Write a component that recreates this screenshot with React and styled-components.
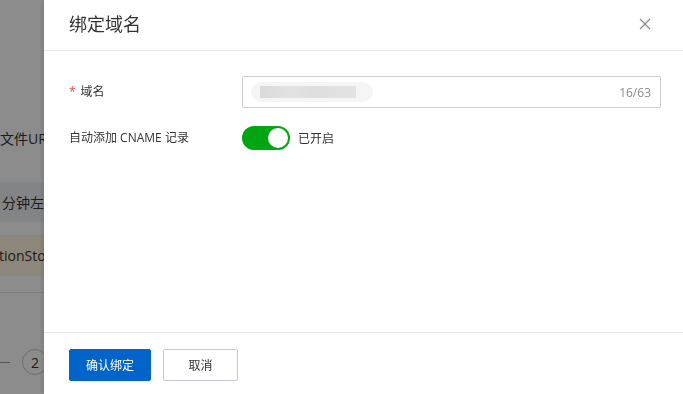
import React from "react";
import styled, { createGlobalStyle } from "styled-components";

const Global = createGlobalStyle`
  html, body { margin: 0; padding: 0; height: 100%; overflow: hidden; }
  body { font-family: "Open Sans", "Noto Sans CJK SC", sans-serif; background: #fff; color: #333; }
  #root { height: 100%; }
`;

const Page = styled.div`
  height: 100%;
  width: 44px;
  display: flex;
  flex-direction: column;
  font-size: 14px;
  color: #333;
  overflow: hidden;
`;

const PageLine = styled.div`
  height: ${(p) => p.$h}px;
  flex: none;
  display: flex;
  align-items: center;
  white-space: nowrap;
  overflow: hidden;
  background: ${(p) => p.$bg || "transparent"};
  margin-top: ${(p) => p.$mt || 0}px;
  border-bottom: ${(p) => (p.$border ? "1px solid #e6e6e6" : "none")};
  text-indent: ${(p) => p.$indent || 0}px;
`;

const Pager = styled.div`
  display: flex;
  align-items: center;
  margin-top: 56px;
  height: 26px;
  flex: none;
`;

const PagerDash = styled.span`
  width: 10px;
  height: 1px;
  background: #999;
  margin-right: 12px;
  flex: none;
`;

const PagerNum = styled.span`
  width: 24px;
  height: 24px;
  border: 1px solid #c8c8c8;
  border-radius: 50%;
  display: flex;
  align-items: center;
  justify-content: center;
  font-size: 14px;
  flex: none;
`;

const Mask = styled.div`
  position: fixed;
  inset: 0;
  background: rgba(0, 0, 0, 0.45);
`;

const Drawer = styled.aside`
  position: fixed;
  top: 0;
  right: 0;
  bottom: 0;
  width: 639px;
  background: #fff;
  display: flex;
  flex-direction: column;
  box-shadow: -2px 0 4px rgba(0, 0, 0, 0.12);
`;

const Header = styled.header`
  height: 51px;
  flex: none;
  display: flex;
  align-items: center;
  justify-content: space-between;
  padding: 0 31px 3px 25px;
  border-bottom: 1px solid #e8e8e8;
  box-sizing: border-box;
`;

const Title = styled.h2`
  margin: 0;
  font-size: 18px;
  font-weight: 400;
  color: #333;
  line-height: 24px;
`;

const CloseBtn = styled.button`
  border: 0;
  background: none;
  padding: 0;
  width: 14px;
  height: 14px;
  display: flex;
  align-items: center;
  justify-content: center;
  cursor: pointer;
`;

const Body = styled.div`
  flex: 1;
  padding: 25px 22px 0 25px;
  display: flex;
  flex-direction: column;
  gap: 18px;
`;

const Row = styled.div`
  display: grid;
  grid-template-columns: 173px 1fr;
  align-items: center;
  min-height: ${(p) => p.$h}px;
`;

const Label = styled.label`
  font-size: 12px;
  line-height: 16px;
  color: #333;
  display: flex;
  align-items: center;
`;

const Required = styled.span`
  color: #e5484d;
  margin-right: 5px;
  font-size: 12px;
`;

const InputBox = styled.div`
  height: 32px;
  border: 1px solid #c9ccd2;
  border-radius: 2px;
  box-sizing: border-box;
  display: flex;
  align-items: center;
  justify-content: space-between;
  padding: 0 9px 0 8px;
`;

const Redacted = styled.span`
  width: 122px;
  height: 20px;
  border-radius: 10px;
  background: #f5f5f5;
  display: flex;
  align-items: center;
  padding-left: 9px;
  box-sizing: border-box;
  filter: blur(0.6px);
`;

const RedactedBlock = styled.span`
  width: 96px;
  height: 12px;
  background: linear-gradient(90deg, #d9d9d9, #e2e2e2 30%, #dedede 60%, #e3e3e3);
`;

const Counter = styled.span`
  font-size: 12px;
  color: #888;
`;

const SwitchWrap = styled.div`
  display: flex;
  align-items: center;
  gap: 8px;
  font-size: 12px;
  color: #333;
`;

const Switch = styled.span`
  width: 48px;
  height: 24px;
  border-radius: 12px;
  background: ${(p) => (p.$on ? "#00a611" : "#ccc")};
  display: flex;
  align-items: center;
  justify-content: ${(p) => (p.$on ? "flex-end" : "flex-start")};
  padding: 0 2px;
  box-sizing: border-box;
`;

const Knob = styled.span`
  width: 20px;
  height: 20px;
  border-radius: 50%;
  background: #fff;
`;

const Footer = styled.footer`
  flex: none;
  height: 62px;
  border-top: 1px solid #e8e8e8;
  padding: 16px 25px 0;
  display: flex;
  gap: 12px;
  box-sizing: border-box;
`;

const Button = styled.button`
  height: 32px;
  width: ${(p) => p.$w}px;
  font-family: inherit;
  font-size: 12px;
  border-radius: 2px;
  cursor: pointer;
  border: 1px solid ${(p) => (p.$primary ? "#0064c8" : "#c5c8ce")};
  background: ${(p) => (p.$primary ? "#0064c8" : "#fff")};
  color: ${(p) => (p.$primary ? "#fff" : "#333")};
  padding: 0;
`;

export default function App() {
  return (
    <>
      <Global />
      <Page>
        <PageLine $h={25} $mt={125}>文件URL，可直接访问</PageLine>
        <PageLine $h={40} $mt={32} $bg="#eff1f5" $indent={2}>分钟左右生效</PageLine>
        <PageLine $h={41} $mt={13} $bg="#fff6df" $indent={-1}>tionStorage</PageLine>
        <PageLine $h={16} $border />
        <Pager>
          <PagerDash />
          <PagerNum>2</PagerNum>
        </Pager>
      </Page>
      <Mask />
      <Drawer>
        <Header>
          <Title>绑定域名</Title>
          <CloseBtn aria-label="关闭">
            <svg width="12" height="12" viewBox="0 0 12 12">
              <path d="M1 1 L11 11 M11 1 L1 11" stroke="#8a8a8a" strokeWidth="1.2" fill="none" />
            </svg>
          </CloseBtn>
        </Header>
        <Body>
          <Row $h={32}>
            <Label><Required>*</Required>域名</Label>
            <InputBox>
              <Redacted><RedactedBlock /></Redacted>
              <Counter>16/63</Counter>
            </InputBox>
          </Row>
          <Row $h={24}>
            <Label>自动添加 CNAME 记录</Label>
            <SwitchWrap>
              <Switch $on><Knob /></Switch>
              已开启
            </SwitchWrap>
          </Row>
        </Body>
        <Footer>
          <Button $primary $w={82}>确认绑定</Button>
          <Button $w={75}>取消</Button>
        </Footer>
      </Drawer>
    </>
  );
}
